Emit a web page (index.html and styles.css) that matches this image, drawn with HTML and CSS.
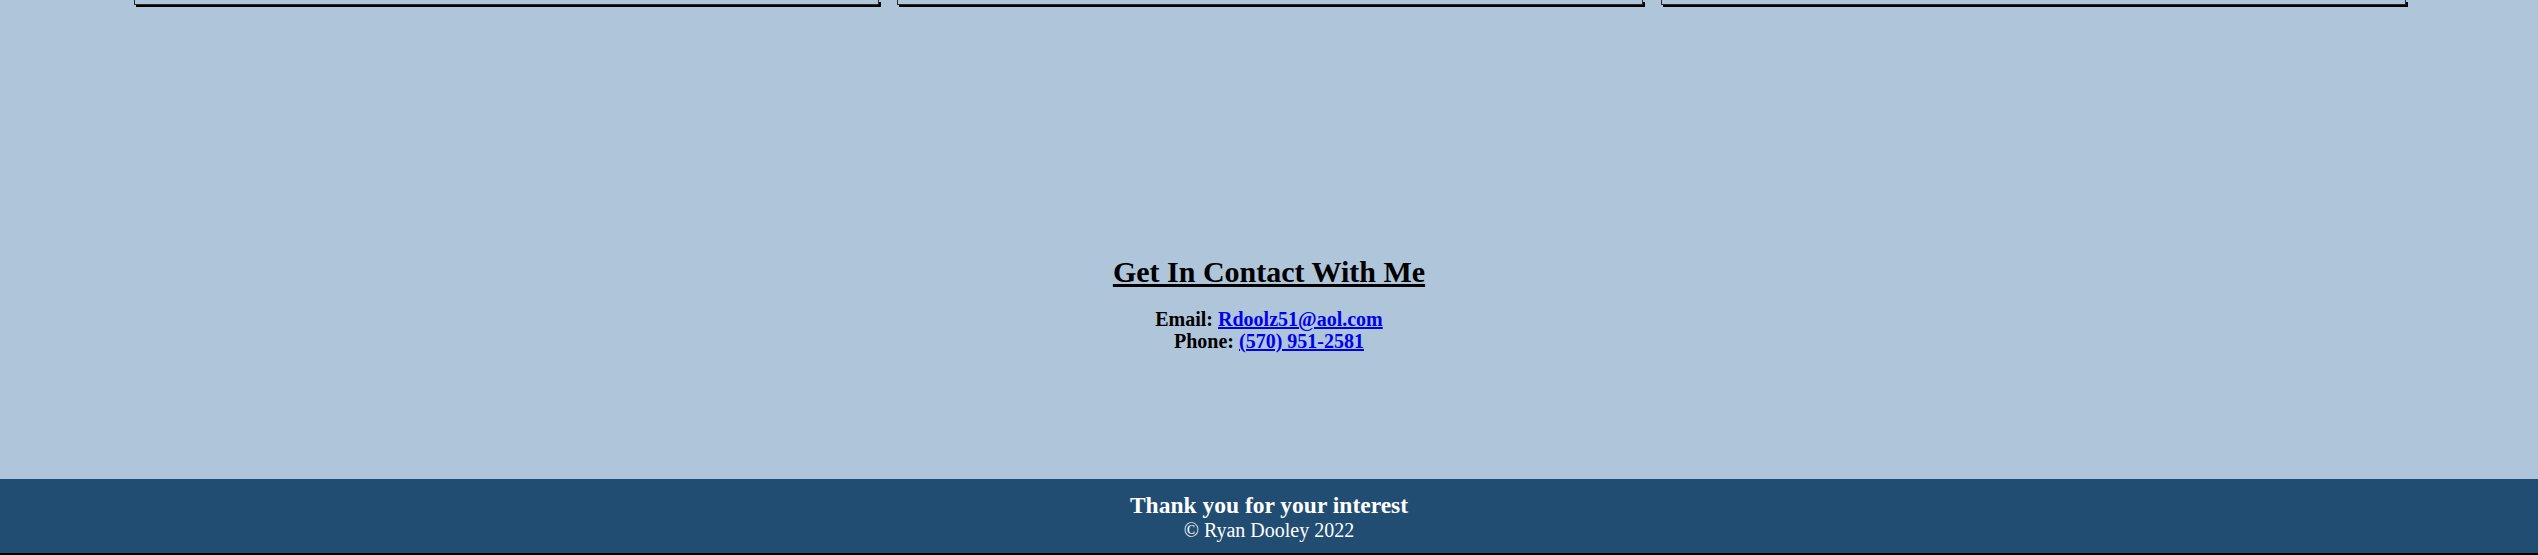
FILE: index.html
```html
<!DOCTYPE html>
<html lang="en">
<head>
<meta charset="utf-8">
<title>Ryan Dooley</title>
<link rel="stylesheet" href="styles.css">
</head>
<body>
<div class="page-top">
  <div class="cards">
    <div class="card"></div>
    <div class="card"></div>
    <div class="card"></div>
  </div>
  <section class="contact">
    <h2 class="contact-title">Get In Contact With Me</h2>
    <p class="contact-info">
      Email: <a href="mailto:Rdoolz51@aol.com">Rdoolz51@aol.com</a><br>
      Phone: <a href="tel:5709512581">(570) 951-2581</a>
    </p>
  </section>
</div>
<footer class="footer">
  <p class="footer-thanks">Thank you for your interest</p>
  <p class="footer-copy">&copy; Ryan Dooley 2022</p>
</footer>
</body>
</html>
```

FILE: styles.css
```css
html, body {
  margin: 0;
  padding: 0;
}

body {
  background: #afc5da;
  font-family: "Liberation Serif", "Times New Roman", serif;
  color: #000;
  height: 555px;
  overflow: hidden;
}

.page-top {
  height: 479px;
}

.cards {
  display: grid;
  grid-template-columns: 745px 746px 745px;
  column-gap: 18px;
  padding-left: 134px;
}

.card {
  height: 4px;
  border: 1px solid #2a2a2a;
  border-top: none;
  box-shadow: 2px 2px 0 #000;
}

.contact {
  margin-top: 250px;
  text-align: center;
}

.contact-title {
  margin: 0;
  font-size: 30px;
  line-height: 34px;
  font-weight: bold;
  text-decoration: underline;
}

.contact-info {
  margin: 19px 0 0;
  font-size: 20px;
  line-height: 22px;
  font-weight: bold;
}

.contact-info a {
  color: #0000ee;
}

.footer {
  box-sizing: border-box;
  height: 76px;
  padding-top: 13px;
  background: #224d73;
  border-bottom: 2px solid #000;
  color: #fff;
  text-align: center;
}

.footer-thanks {
  margin: 0;
  font-size: 23.5px;
  line-height: 26px;
  font-weight: bold;
}

.footer-copy {
  margin: 0;
  font-size: 20px;
  line-height: 24px;
}
```
